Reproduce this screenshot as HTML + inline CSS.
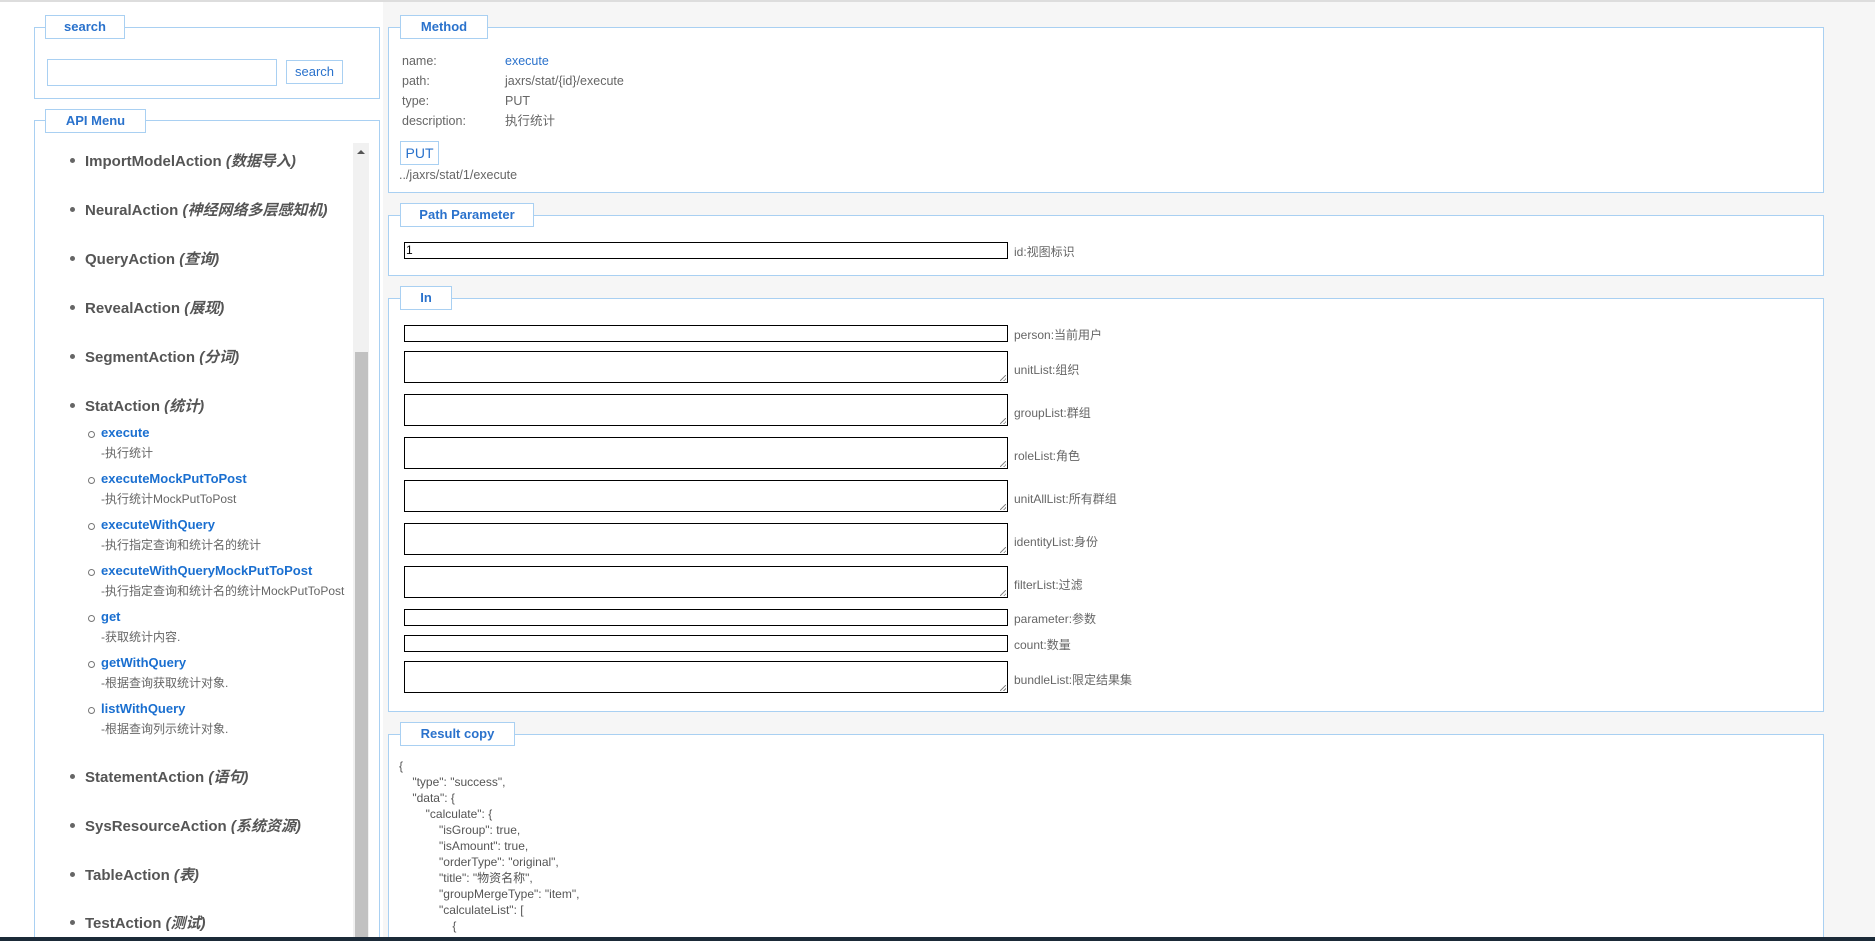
<!DOCTYPE html>
<html><head><meta charset="utf-8">
<style>
*{box-sizing:border-box;margin:0;padding:0}
html{overflow:hidden;width:1875px;height:941px}
body{width:1875px;height:941px;overflow:hidden;background:#fff;position:relative;font-family:"Liberation Sans","Noto Sans CJK SC",sans-serif;color:#666;font-size:12px}
.abs{position:absolute}
.fs{position:absolute;border:1px solid #a9d0f2;background:#fff}
.lg{position:absolute;border:1px solid #a9d0f2;background:#fff;color:#2a72cc;font-weight:bold;font-size:13px;text-align:center;line-height:22px}
.inp{position:absolute;border:1px solid #000;background:#fff;height:17px;left:404px;width:604px}
.ta{height:32px}
.ta:after{content:"";position:absolute;right:1px;bottom:1px;width:6px;height:6px;background:linear-gradient(135deg,transparent 45%,#888 45%,#888 55%,transparent 55%,transparent 75%,#888 75%,#888 85%,transparent 85%)}
.lab{position:absolute;left:1014px;font-size:12px;color:#666}
.mi{position:absolute;left:85px;font-size:15px;font-weight:bold;color:#555;white-space:nowrap}
.mi i{font-weight:bold}
.mi:before{content:"";position:absolute;left:-15px;top:8px;width:5px;height:5px;border-radius:50%;background:#666}
.si{position:absolute;left:101px;font-size:13px;font-weight:bold;color:#1a6fd0;white-space:nowrap}
.si:before{content:"";position:absolute;left:-13px;top:6px;width:5px;height:5px;border-radius:50%;border:1px solid #777}
.sd{position:absolute;left:101px;font-size:12px;color:#666;white-space:nowrap}
.js{position:absolute;left:399px;font-size:12px;color:#555;white-space:pre;line-height:16px}
</style></head><body>
<div class="abs" style="left:0;top:0;width:1875px;height:2px;background:#ddd"></div>
<div class="abs" style="left:383px;top:2px;width:1492px;height:936px;background:#f6f6f6"></div>

<!-- search -->
<div class="fs" style="left:34px;top:27px;width:346px;height:72px"></div>
<div class="lg" style="left:45px;top:15px;width:80px;height:24px">search</div>
<div class="abs" style="left:47px;top:59px;width:230px;height:27px;border:1px solid #a9d0f2"></div>
<div class="abs" style="left:286px;top:60px;width:57px;height:24px;border:1px solid #a9d0f2;color:#2a72cc;font-size:13px;text-align:center;line-height:22px">search</div>

<!-- API menu -->
<div class="fs" style="left:34px;top:120px;width:346px;height:818px"></div>
<div class="lg" style="left:45px;top:109px;width:101px;height:24px">API Menu</div>
<div class="abs" style="left:353px;top:143px;width:16px;height:795px;background:#f1f1f1"></div>
<div class="abs" style="left:355px;top:352px;width:13px;height:586px;background:#c1c1c1"></div>
<div class="abs" style="left:357px;top:150px;width:0;height:0;border-left:4px solid transparent;border-right:4px solid transparent;border-bottom:4px solid #555"></div>

<div class="mi" style="top:150px">ImportModelAction <i>(数据导入)</i></div>
<div class="mi" style="top:199px">NeuralAction <i>(神经网络多层感知机)</i></div>
<div class="mi" style="top:248px">QueryAction <i>(查询)</i></div>
<div class="mi" style="top:297px">RevealAction <i>(展现)</i></div>
<div class="mi" style="top:346px">SegmentAction <i>(分词)</i></div>
<div class="mi" style="top:395px">StatAction <i>(统计)</i></div>

<div class="si" style="top:425px">execute</div><div class="sd" style="top:444px">-执行统计</div>
<div class="si" style="top:471px">executeMockPutToPost</div><div class="sd" style="top:490px">-执行统计MockPutToPost</div>
<div class="si" style="top:517px">executeWithQuery</div><div class="sd" style="top:536px">-执行指定查询和统计名的统计</div>
<div class="si" style="top:563px">executeWithQueryMockPutToPost</div><div class="sd" style="top:582px">-执行指定查询和统计名的统计MockPutToPost</div>
<div class="si" style="top:609px">get</div><div class="sd" style="top:628px">-获取统计内容.</div>
<div class="si" style="top:655px">getWithQuery</div><div class="sd" style="top:674px">-根据查询获取统计对象.</div>
<div class="si" style="top:701px">listWithQuery</div><div class="sd" style="top:720px">-根据查询列示统计对象.</div>

<div class="mi" style="top:766px">StatementAction <i>(语句)</i></div>
<div class="mi" style="top:815px">SysResourceAction <i>(系统资源)</i></div>
<div class="mi" style="top:864px">TableAction <i>(表)</i></div>
<div class="mi" style="top:912px">TestAction <i>(测试)</i></div>

<!-- Method -->
<div class="fs" style="left:388px;top:27px;width:1436px;height:166px"></div>
<div class="lg" style="left:400px;top:15px;width:88px;height:24px">Method</div>
<div class="abs" style="left:402px;top:51px;line-height:20px;font-size:12.5px">name:<br>path:<br>type:<br>description:</div>
<div class="abs" style="left:505px;top:51px;line-height:20px;font-size:12.5px"><span style="color:#2a72cc">execute</span><br>jaxrs/stat/{id}/execute<br>PUT<br>执行统计</div>
<div class="abs" style="left:400px;top:141px;width:39px;height:24px;border:1px solid #a9d0f2;color:#2a72cc;font-size:14px;text-align:center;line-height:22px">PUT</div>
<div class="abs" style="left:399px;top:167px;line-height:16px;font-size:12.5px">../jaxrs/stat/1/execute</div>

<!-- Path parameter -->
<div class="fs" style="left:388px;top:215px;width:1436px;height:61px"></div>
<div class="lg" style="left:400px;top:203px;width:134px;height:24px">Path Parameter</div>
<div class="inp" style="top:242px;font-size:12px;color:#000;line-height:15px;padding-left:1px">1</div>
<div class="lab" style="top:243px">id:视图标识</div>

<!-- In -->
<div class="fs" style="left:388px;top:298px;width:1436px;height:414px"></div>
<div class="lg" style="left:400px;top:286px;width:52px;height:24px">In</div>
<div class="inp" style="top:325px"></div><div class="lab" style="top:326px">person:当前用户</div>
<div class="inp ta" style="top:351px"></div><div class="lab" style="top:361px">unitList:组织</div>
<div class="inp ta" style="top:394px"></div><div class="lab" style="top:404px">groupList:群组</div>
<div class="inp ta" style="top:437px"></div><div class="lab" style="top:447px">roleList:角色</div>
<div class="inp ta" style="top:480px"></div><div class="lab" style="top:490px">unitAllList:所有群组</div>
<div class="inp ta" style="top:523px"></div><div class="lab" style="top:533px">identityList:身份</div>
<div class="inp ta" style="top:566px"></div><div class="lab" style="top:576px">filterList:过滤</div>
<div class="inp" style="top:609px"></div><div class="lab" style="top:610px">parameter:参数</div>
<div class="inp" style="top:635px"></div><div class="lab" style="top:636px">count:数量</div>
<div class="inp ta" style="top:661px"></div><div class="lab" style="top:671px">bundleList:限定结果集</div>

<!-- Result -->
<div class="fs" style="left:388px;top:734px;width:1436px;height:204px;border-bottom:none"></div>
<div class="lg" style="left:400px;top:722px;width:115px;height:24px">Result copy</div>
<div class="js" style="top:758px;height:180px;overflow:hidden">{
    "type": "success",
    "data": {
        "calculate": {
            "isGroup": true,
            "isAmount": true,
            "orderType": "original",
            "title": "物资名称",
            "groupMergeType": "item",
            "calculateList": [
                {
                    "ci...": "627_99_9...f2...4240_9519...l3539_9f9f3l",</div>

<div class="abs" style="left:0;top:937px;width:1875px;height:4px;background:#1b2a38"></div>
</body></html>
